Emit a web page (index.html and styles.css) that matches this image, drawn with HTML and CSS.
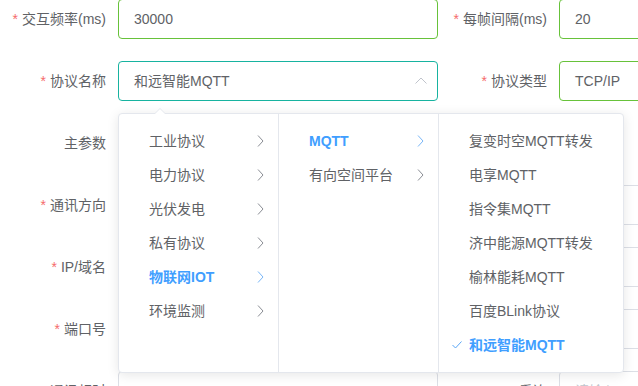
FILE: index.html
```html
<!DOCTYPE html>
<html lang="zh-CN">
<head>
<meta charset="utf-8">
<title>协议配置</title>
<link rel="stylesheet" href="styles.css">
</head>
<body>
<form class="form">
  <div class="row">
    <div class="item"><label class="label"><i class="req">*</i>交互频率(ms)</label><div class="input ok">30000</div></div>
    <div class="item"><label class="label"><i class="req">*</i>每帧间隔(ms)</label><div class="input ok">20</div></div>
  </div>
  <div class="row">
    <div class="item"><label class="label"><i class="req">*</i>协议名称</label>
      <div class="cascader">
        <div class="input focus">和远智能MQTT
          <svg class="up" width="12" height="7" viewBox="0 0 12 7"><polyline points="0.5,6.5 6,1 11.5,6.5" fill="none" stroke="#c0c4cc" stroke-width="1"/></svg>
        </div>
        <div class="panel">
          <div class="menu">
            <div class="node">工业协议<svg class="arr" width="7" height="12" viewBox="0 0 7 12"><polyline points="1,0.5 6,6 1,11.5" fill="none" stroke="#8a8d94" stroke-width="1"/></svg></div>
            <div class="node">电力协议<svg class="arr" width="7" height="12" viewBox="0 0 7 12"><polyline points="1,0.5 6,6 1,11.5" fill="none" stroke="#8a8d94" stroke-width="1"/></svg></div>
            <div class="node">光伏发电<svg class="arr" width="7" height="12" viewBox="0 0 7 12"><polyline points="1,0.5 6,6 1,11.5" fill="none" stroke="#8a8d94" stroke-width="1"/></svg></div>
            <div class="node">私有协议<svg class="arr" width="7" height="12" viewBox="0 0 7 12"><polyline points="1,0.5 6,6 1,11.5" fill="none" stroke="#8a8d94" stroke-width="1"/></svg></div>
            <div class="node active">物联网IOT<svg class="arr" width="7" height="12" viewBox="0 0 7 12"><polyline points="1,0.5 6,6 1,11.5" fill="none" stroke="#79b6f7" stroke-width="1"/></svg></div>
            <div class="node">环境监测<svg class="arr" width="7" height="12" viewBox="0 0 7 12"><polyline points="1,0.5 6,6 1,11.5" fill="none" stroke="#8a8d94" stroke-width="1"/></svg></div>
          </div>
          <div class="menu">
            <div class="node active">MQTT<svg class="arr" width="7" height="12" viewBox="0 0 7 12"><polyline points="1,0.5 6,6 1,11.5" fill="none" stroke="#79b6f7" stroke-width="1"/></svg></div>
            <div class="node">有向空间平台<svg class="arr" width="7" height="12" viewBox="0 0 7 12"><polyline points="1,0.5 6,6 1,11.5" fill="none" stroke="#8a8d94" stroke-width="1"/></svg></div>
          </div>
          <div class="menu last">
            <div class="node">复变时空MQTT转发</div>
            <div class="node">电享MQTT</div>
            <div class="node">指令集MQTT</div>
            <div class="node">济中能源MQTT转发</div>
            <div class="node">榆林能耗MQTT</div>
            <div class="node">百度BLink协议</div>
            <div class="node active"><svg class="check" width="10" height="8" viewBox="0 0 10 8"><polyline points="0.5,4 3.5,7 9.5,0.5" fill="none" stroke="#5aa6f5" stroke-width="1"/></svg>和远智能MQTT</div>
          </div>
        </div>
      </div>
    </div>
    <div class="item"><label class="label"><i class="req">*</i>协议类型</label><div class="input ok">TCP/IP</div></div>
  </div>
  <div class="row">
    <div class="item"><label class="label">主参数</label><div class="blank"></div></div>
  </div>
  <div class="row">
    <div class="item"><label class="label"><i class="req">*</i>通讯方向</label><div class="input"></div></div>
    <div class="item"><label class="label"></label><div class="input"></div></div>
  </div>
  <div class="row">
    <div class="item"><label class="label"><i class="req">*</i>IP/域名</label><div class="input"></div></div>
    <div class="item"><label class="label"></label><div class="input"></div></div>
  </div>
  <div class="row">
    <div class="item"><label class="label"><i class="req">*</i>端口号</label><div class="input"></div></div>
    <div class="item"><label class="label"></label><div class="input"></div></div>
  </div>
  <div class="row">
    <div class="item"><label class="label">通讯超时</label><div class="input">3000</div></div>
    <div class="item"><label class="label">重连</label><div class="input ph">请输入</div></div>
  </div>
</form>
</body>
</html>
```

FILE: styles.css
```css
html, body {
  margin: 0;
  padding: 0;
  overflow: hidden;
  background: #fff;
}
body {
  padding-left: 8px;
  font-family: "Liberation Sans", "Noto Sans CJK SC", sans-serif;
  font-size: 14px;
  color: #606266;
}
.form {
  margin-top: -1px;
  width: 900px;
}
.row {
  display: flex;
  gap: 11px;
  height: 40px;
  margin-bottom: 22px;
}
.item {
  display: flex;
  width: 430px;
  flex: none;
}
.label {
  width: 110px;
  flex: none;
  box-sizing: border-box;
  padding-right: 12px;
  text-align: right;
  line-height: 40px;
  color: #606266;
  white-space: nowrap;
}
.req {
  font-style: normal;
  color: #f56c6c;
  margin-right: 4px;
}
.input {
  width: 320px;
  height: 40px;
  box-sizing: border-box;
  border: 1px solid #dcdfe6;
  border-radius: 4px;
  padding: 0 15px;
  line-height: 38px;
  color: #606266;
  position: relative;
  background: #fff;
}
.input.ok { border-color: #67c23a; }
.input.focus { border-color: #17b3a0; }
.input.ph { color: #c0c4cc; }
.blank { width: 320px; }
.up {
  position: absolute;
  right: 10px;
  top: 15px;
}
.cascader {
  position: relative;
  width: 320px;
}
.panel {
  position: absolute;
  left: 0;
  top: calc(100% + 12px);
  z-index: 10;
  display: flex;
  background: #fff;
  border: 1px solid #e4e7ed;
  border-radius: 4px;
  box-shadow: 0 2px 12px 0 rgba(0, 0, 0, 0.1);
}
.panel::before,
.panel::after {
  content: "";
  position: absolute;
  left: 35px;
  width: 0;
  height: 0;
  border: 6px solid transparent;
  border-top-width: 0;
}
.panel::before {
  top: -6px;
  border-bottom-color: #e4e7ed;
}
.panel::after {
  top: -5px;
  border-bottom-color: #fff;
}
.menu {
  width: 159px;
  border-right: 1px solid #e4e7ed;
  padding: 10px 0;
}
.menu.last {
  width: 184px;
  border-right: none;
}
.node {
  position: relative;
  height: 34px;
  line-height: 34px;
  padding: 0 30px;
  white-space: nowrap;
  color: #606266;
}
.node.active {
  color: #409eff;
  font-weight: 700;
}
.arr {
  position: absolute;
  right: 14px;
  top: 11px;
}
.check {
  position: absolute;
  left: 13px;
  top: 13px;
}
```
